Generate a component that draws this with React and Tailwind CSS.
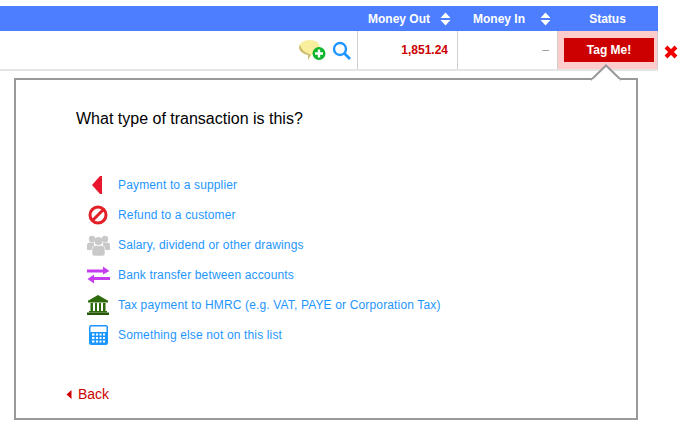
import React from 'react';

const SortArrows = () => (
  <svg width="11" height="14" viewBox="0 0 11 14" className="shrink-0">
    <path d="M5.5 0.5 L10.5 6 L0.5 6 Z M0.5 8 L10.5 8 L5.5 13.5 Z" fill="#fff" />
  </svg>
);

const SupplierIcon = () => (
  <svg width="14" height="18" viewBox="0 0 14 18">
    <path d="M9 0 L11 0 L11 18 L9 18 L1 9 Z" fill="#e8172d" />
  </svg>
);

const RefundIcon = () => (
  <svg width="20" height="20" viewBox="0 0 20 20">
    <circle cx="10" cy="10" r="8" fill="none" stroke="#e32028" strokeWidth="3" />
    <path d="M15.5 4.5 L4.5 15.5" stroke="#e32028" strokeWidth="3" />
  </svg>
);

const PeopleIcon = () => (
  <svg width="23" height="21" viewBox="0 0 23 21" fill="#c9c9c9">
    <circle cx="5" cy="4" r="3.2" />
    <circle cx="18" cy="4" r="3.2" />
    <path d="M0 10 Q0 7.5 3 7.5 L7 7.5 L7 15 L0 15 Z M16 7.5 L20 7.5 Q23 7.5 23 10 L23 15 L16 15 Z" />
    <circle cx="11.5" cy="6" r="4" />
    <path d="M5 14 Q5 10.5 8.5 10.5 L14.5 10.5 Q18 10.5 18 14 L18 19 Q18 21 15.5 21 L7.5 21 Q5 21 5 19 Z" stroke="#fff" strokeWidth="0.6" />
  </svg>
);

const TransferIcon = () => (
  <svg width="23" height="18" viewBox="0 0 23 18" fill="#c63df0">
    <path d="M0 3.5 L16 3.5 L16 0.5 L22.5 5 L16 8.5 L16 6.5 L0 6.5 Z" />
    <path d="M23 11 L7 11 L7 8.5 L0.5 13 L7 17.5 L7 14 L23 14 Z" />
  </svg>
);

const BankIcon = () => (
  <svg width="22" height="20" viewBox="0 0 22 20">
    <path d="M11 0 L21.5 6 L0.5 6 Z" fill="#2f6b0c" />
    <rect x="1" y="6" width="20" height="1.5" fill="#2f6b0c" />
    <path d="M3.5 8 H6 V16 H3.5 Z M8 8 H10 V16 H8 Z M12 8 H14 V16 H12 Z M16 8 H18.5 V16 H16 Z" fill="#2f6b0c" />
    <rect x="2" y="16" width="18" height="1.5" fill="#2f6b0c" />
    <rect x="0" y="17.5" width="22" height="2.5" fill="#27590a" />
  </svg>
);

const CalculatorIcon = () => (
  <svg width="19" height="20" viewBox="0 0 19 20">
    <rect x="0.75" y="0.75" width="17.5" height="18.5" rx="1.5" fill="none" stroke="#1e96ff" strokeWidth="1.5" />
    <path d="M1 7 H18 V19 H1 Z" fill="#1e96ff" />
    <path d="M5.5 8.5 V18 M9.5 8.5 V18 M13.5 8.5 V18" stroke="#fff" strokeWidth="0" />
    <path d="M3 8.5 H5.5 V10.5 H3 Z M7 8.5 H9 V10.5 H7 Z M10.5 8.5 H12.5 V10.5 H10.5 Z M14 8.5 H16 V10.5 H14 Z M3 12 H5.5 V14 H3 Z M7 12 H9 V14 H7 Z M10.5 12 H12.5 V14 H10.5 Z M14 12 H16 V14 H14 Z M3 15.5 H5.5 V17.5 H3 Z M7 15.5 H9 V17.5 H7 Z M10.5 15.5 H12.5 V17.5 H10.5 Z M14 15.5 H16 V17.5 H14 Z" fill="#fff" />
  </svg>
);

const transactionTypes = [
  { label: 'Payment to a supplier', icon: <SupplierIcon /> },
  { label: 'Refund to a customer', icon: <RefundIcon /> },
  { label: 'Salary, dividend or other drawings', icon: <PeopleIcon /> },
  { label: 'Bank transfer between accounts', icon: <TransferIcon /> },
  { label: 'Tax payment to HMRC (e.g. VAT, PAYE or Corporation Tax)', icon: <BankIcon /> },
  { label: 'Something else not on this list', icon: <CalculatorIcon /> },
];

export default function App() {
  return (
    <div className="relative w-[694px] h-[430px] bg-white overflow-hidden pt-[6px] font-['Liberation_Sans',Arial,sans-serif]">
      <div className="w-[658px]">
        {/* table header */}
        <div className="flex h-[25px] bg-[#4d7eff] text-white text-xs font-bold items-center">
          <div className="w-[357px]" />
          <div className="w-[100px] flex items-center pl-[11px]">
            <span>Money Out</span>
            <span className="ml-[10px] flex"><SortArrows /></span>
          </div>
          <div className="w-[100px] flex items-center pl-[16px]">
            <span>Money In</span>
            <span className="ml-[15px] flex"><SortArrows /></span>
          </div>
          <div className="flex-1 text-center">Status</div>
        </div>

        {/* transaction row */}
        <div className="flex h-[40px] border-b-2 border-[#e4e4e4]">
          <div className="w-[357px] flex items-center justify-end gap-[6px] pr-[6px]">
            <svg width="27" height="23" viewBox="0 0 27 23">
              <path d="M11 1 C17 1 21 4 21 9 C21 14 16 16 12 16 L9 21 L9 16 C4 15 0 12 0 8 C0 4 5 1 11 1 Z" fill="#f8ee9e" />
              <path d="M0 8 C0 12 4 15 9 16 L9 21 L12 16 C9 14 3 13 1 6 Z" fill="#cdbd72" />
              <circle cx="20" cy="14.5" r="6.5" fill="#0cb52b" />
              <path d="M20 10.5 V18.5 M16 14.5 H24" stroke="#fff" strokeWidth="2.4" />
            </svg>
            <svg width="19" height="19" viewBox="0 0 19 19" fill="none" stroke="#1e96ff">
              <circle cx="8" cy="8" r="6" strokeWidth="2.4" />
              <path d="M12.5 12.5 L18 18" strokeWidth="2.8" />
            </svg>
          </div>
          <div className="w-[100px] border-l border-[#cfcfcf] flex items-center justify-end pr-[9px] text-xs font-bold text-[#cc0000]">
            1,851.24
          </div>
          <div className="w-[100px] border-l border-[#cfcfcf] flex items-center justify-end pr-[8px] text-xs text-[#999]">
            –
          </div>
          <div className="flex-1 border-l border-r border-[#cfcfcf] bg-[#ffcccc] pl-[6px] pt-[7px]">
            <div className="w-[90px] h-[24px] bg-[#cc0000] text-white text-xs font-bold flex items-center justify-center">
              Tag Me!
            </div>
          </div>
        </div>
      </div>

      {/* popup */}
      <div className="relative ml-[14px] mt-[7px] w-[624px] h-[342px] border-2 border-[#999] pl-[60px] pt-[29px]">
        <svg width="32" height="17" viewBox="0 0 32 17" className="absolute left-[574px] top-[-16px]">
          <path d="M1 16 L16 1.5 L31 16" fill="#fff" stroke="#999" strokeWidth="2" />
          <rect x="2.5" y="15" width="27" height="2" fill="#fff" />
        </svg>
        <div className="text-base leading-[20px] text-black">What type of transaction is this?</div>

        <div className="mt-[41px] flex flex-col">
          {transactionTypes.map((item) => (
            <div key={item.label} className="flex items-center h-[30px]">
              <span className="w-[24px] ml-[10px] mr-[8px] flex justify-center">{item.icon}</span>
              <span className="text-xs tracking-[0.15px] text-[#1e96ff]">{item.label}</span>
            </div>
          ))}
        </div>

        <div className="mt-[35px] ml-[-10px] flex items-center text-sm leading-[18px] text-[#cc0000]">
          <svg width="6" height="9" viewBox="0 0 6 9" className="mr-[6px]">
            <path d="M5.5 0 V9 L0.5 4.5 Z" fill="#cc0000" />
          </svg>
          Back
        </div>
      </div>

      {/* delete cross */}
      <svg width="14" height="14" viewBox="0 0 14 14" className="absolute left-[664px] top-[45px]">
        <path d="M2 2 L12 12 M12 2 L2 12" stroke="#f00000" strokeWidth="4" />
      </svg>
    </div>
  );
}
